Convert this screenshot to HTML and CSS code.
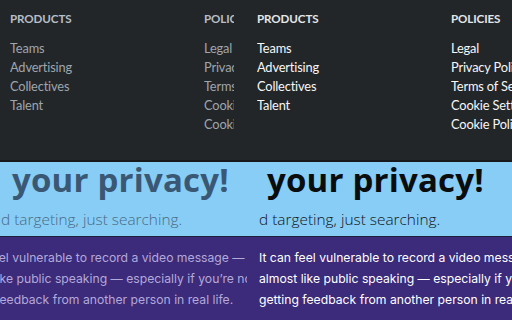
FILE: index.html
```html
<!DOCTYPE html>
<html>
<head>
<meta charset="utf-8">
<link rel="stylesheet" href="styles.css">
</head>
<body>
<div class="screen">
  <div class="pane pane-left dim">
    <footer class="footer">
      <div class="col">
        <h5 class="col-title">PRODUCTS</h5>
        <ul class="links">
          <li>Teams</li>
          <li>Advertising</li>
          <li>Collectives</li>
          <li>Talent</li>
        </ul>
      </div>
      <div class="col">
        <h5 class="col-title">POLICIES</h5>
        <ul class="links">
          <li>Legal</li>
          <li>Privacy Policy</li>
          <li>Terms of Service</li>
          <li>Cookie Settings</li>
          <li>Cookie Policy</li>
        </ul>
      </div>
    </footer>
    <section class="hero">
      <h1 class="hero-title">your privacy!</h1>
      <p class="hero-sub">d targeting, just searching.</p>
    </section>
    <section class="story">
      <p class="story-text">
        <span class="line">It can feel vulnerable to record a video message —</span>
        <span class="line">almost like public speaking — especially if you’re not</span>
        <span class="line">getting feedback from another person in real life.</span>
      </p>
    </section>
  </div>
  <div class="pane pane-right">
    <footer class="footer">
      <div class="col">
        <h5 class="col-title">PRODUCTS</h5>
        <ul class="links">
          <li>Teams</li>
          <li>Advertising</li>
          <li>Collectives</li>
          <li>Talent</li>
        </ul>
      </div>
      <div class="col">
        <h5 class="col-title">POLICIES</h5>
        <ul class="links">
          <li>Legal</li>
          <li>Privacy Policy</li>
          <li>Terms of Service</li>
          <li>Cookie Settings</li>
          <li>Cookie Policy</li>
        </ul>
      </div>
    </footer>
    <section class="hero">
      <h1 class="hero-title">your privacy!</h1>
      <p class="hero-sub">d targeting, just searching.</p>
    </section>
    <section class="story">
      <p class="story-text">
        <span class="line">It can feel vulnerable to record a video message —</span>
        <span class="line">almost like public speaking — especially if you’re not</span>
        <span class="line">getting feedback from another person in real life.</span>
      </p>
    </section>
  </div>
</div>
</body>
</html>
```

FILE: styles.css
```css
* { box-sizing: border-box; }
html, body { margin: 0; padding: 0; }
body {
  width: 512px;
  height: 320px;
  overflow: hidden;
  background: #232629;
  font-family: "Lato", "Liberation Sans", sans-serif;
}
.screen {
  display: flex;
  width: 512px;
  height: 320px;
}
.pane {
  display: flex;
  flex-direction: column;
  overflow: hidden;
  height: 320px;
}
.pane-left { width: 247px; }
.pane-right { width: 265px; }

/* footer */
.footer {
  height: 160px;
  background: #232629;
  display: grid;
  grid-template-columns: 194px 1fr;
  align-content: start;
  padding: 10px 0 0 10px;
}
.pane-left .footer { padding-right: 13px; }
.col { overflow: hidden; white-space: nowrap; }
.col-title {
  margin: 0 0 12px 0;
  font-size: 11.6px;
  font-weight: 700;
  line-height: 17px;
  letter-spacing: -0.1px;
  color: #e3e6e8;
}
.links {
  list-style: none;
  margin: 0;
  padding: 0;
}
.links li {
  font-size: 12.8px;
  line-height: 19px;
  letter-spacing: -0.15px;
  color: #f7f7f7;
}

/* hero */
.hero {
  height: 77px;
  background: #87cdf6;
  border-top: 2px solid #17191b;
  border-bottom: 1px solid #1d1f3a;
  white-space: nowrap;
}
.hero-title {
  margin: 0;
  font-family: "Open Sans", "Liberation Sans", sans-serif;
  font-weight: 700;
  font-size: 33px;
  line-height: 36px;
  letter-spacing: 0.2px;
  color: #0b0c0d;
  padding-left: 20px;
}
.pane-left .hero-title { padding-left: 12px; }
.hero-sub {
  margin: 12px 0 0 0;
  font-family: "Open Sans", "Liberation Sans", sans-serif;
  font-weight: 300;
  font-size: 15.4px;
  line-height: 20px;
  color: #121417;
  padding-left: 12px;
}
.pane-left .hero-sub { padding-left: 1px; }

/* story */
.story {
  flex: 1;
  background: #3c2b7a;
  padding: 10px 0 0 12px;
}
.story-text {
  margin: 0;
  font-family: "Inter", "Liberation Sans", sans-serif;
  font-size: 12.2px;
  line-height: 21px;
  color: #ffffff;
  white-space: nowrap;
}
.pane-left .story-text { margin-left: -60px; }
.line { display: block; }

/* dimmed pane */
.dim .col-title { color: #b6bec6; }
.dim .links li { color: #9ea5ad; }
.dim .hero-title { color: #3a5873; }
.dim .hero-sub { color: #4b6a82; }
.dim .story-text { color: #b3a9da; }
```
